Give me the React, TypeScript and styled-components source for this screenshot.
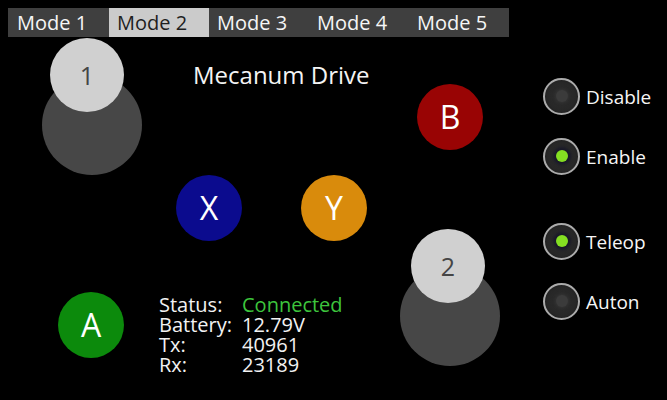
import React, { useState } from 'react';
import styled, { createGlobalStyle } from 'styled-components';

const GlobalStyle = createGlobalStyle`
  html, body {
    margin: 0;
    padding: 0;
    background: #000;
  }
  body {
    font-family: 'Open Sans', 'DejaVu Sans', sans-serif;
    color: #f2f2f2;
  }
`;

const Screen = styled.div`
  width: 667px;
  height: 400px;
  display: grid;
  grid-template-columns: 527px 1fr;
  grid-template-rows: 37px 1fr;
  background: #000;
  overflow: hidden;
`;

const TabBar = styled.div`
  grid-column: 1;
  grid-row: 1;
  margin: 8px 0 0 8px;
  width: 501px;
  height: 29px;
  padding-left: 1px;
  box-sizing: border-box;
  display: flex;
  background: #3f3f3f;
`;

const Tab = styled.div<{ $active: boolean }>`
  width: 100px;
  height: 29px;
  padding-left: 8px;
  box-sizing: border-box;
  font-size: 20px;
  line-height: 29px;
  white-space: nowrap;
  cursor: pointer;
  background: ${p => (p.$active ? '#cbcbcb' : 'transparent')};
  color: ${p => (p.$active ? '#1e1e1e' : '#f6f6f6')};
`;

const Pad = styled.div`
  grid-column: 1;
  grid-row: 2;
  position: relative;
  display: flex;
  flex-direction: column;
`;

const Title = styled.div`
  padding: 22px 0 0 193px;
  font-size: 24px;
  line-height: 32px;
  color: #f4f4f4;
`;

const StatusGrid = styled.div`
  margin-top: auto;
  padding: 0 0 25px 159px;
  display: grid;
  grid-template-columns: 83px auto;
  font-size: 20px;
  line-height: 20px;
  color: #f2f2f2;
`;

const StatusValue = styled.span<{ $ok?: boolean }>`
  color: ${p => (p.$ok ? '#3dc53d' : '#f2f2f2')};
`;

// joystick base + knob, placed on the pad canvas
const Stick = styled.div<{ $x: number; $y: number }>`
  position: absolute;
  left: ${p => p.$x}px;
  top: ${p => p.$y}px;
  width: 100px;
  height: 100px;
  border-radius: 50%;
  background: #474747;
`;

const Knob = styled.div<{ $dx: number }>`
  position: absolute;
  left: ${p => 13 + p.$dx}px;
  top: -37px;
  width: 74px;
  height: 74px;
  border-radius: 50%;
  background: #d0d0d0;
  color: #454545;
  font-size: 25px;
  display: flex;
  align-items: center;
  justify-content: center;
`;

const FaceButton = styled.div<{ $x: number; $y: number; $color: string }>`
  position: absolute;
  left: ${p => p.$x}px;
  top: ${p => p.$y}px;
  width: 66px;
  height: 66px;
  border-radius: 50%;
  background: ${p => p.$color};
  color: #fff;
  font-size: 32px;
  display: flex;
  align-items: center;
  justify-content: center;
  padding-bottom: 2px;
  box-sizing: border-box;
`;

const Side = styled.div`
  grid-column: 2;
  grid-row: 1 / 3;
  padding: 77px 0 0 16px;
  display: flex;
  flex-direction: column;
  gap: 47px;
`;

const RadioGroup = styled.div`
  display: flex;
  flex-direction: column;
  gap: 22px;
`;

const RadioRow = styled.label`
  display: flex;
  align-items: center;
  gap: 6px;
  height: 38px;
  cursor: pointer;
`;

const RadioRing = styled.span`
  width: 37px;
  height: 37px;
  box-sizing: border-box;
  border-radius: 50%;
  border: 2px solid #ababab;
  background: radial-gradient(circle, #2e2e2e 0%, #272727 60%, #161616 100%);
  display: flex;
  align-items: center;
  justify-content: center;
  flex-shrink: 0;
`;

const RadioDot = styled.span<{ $on: boolean }>`
  width: 12px;
  height: 12px;
  border-radius: 50%;
  background: ${p => (p.$on ? '#84de22' : '#3b3b3b')};
  box-shadow: ${p =>
    p.$on ? '0 0 3px 3px rgba(20, 20, 40, 0.8)' : '0 0 3px 1px #343434'};
`;

const RadioLabel = styled.span`
  font-size: 19px;
  color: #f6f6f6;
  padding-top: 1px;
`;

const modes = ['Mode 1', 'Mode 2', 'Mode 3', 'Mode 4', 'Mode 5'];

const Radio = ({
  label,
  on,
  onPick,
}: {
  label: string;
  on: boolean;
  onPick: () => void;
}) => (
  <RadioRow onClick={onPick}>
    <RadioRing>
      <RadioDot $on={on} />
    </RadioRing>
    <RadioLabel>{label}</RadioLabel>
  </RadioRow>
);

export default function App() {
  const [mode, setMode] = useState(1);
  const [enabled, setEnabled] = useState(true);
  const [teleop, setTeleop] = useState(true);

  return (
    <>
      <GlobalStyle />
      <Screen>
        <TabBar>
          {modes.map((m, i) => (
            <Tab key={m} $active={i === mode} onClick={() => setMode(i)}>
              {m}
            </Tab>
          ))}
        </TabBar>

        <Pad>
          <Title>Mecanum Drive</Title>

          <Stick $x={42} $y={38}>
            <Knob $dx={-5}>1</Knob>
          </Stick>
          <Stick $x={400} $y={229}>
            <Knob $dx={-2}>2</Knob>
          </Stick>

          <FaceButton $x={417} $y={47} $color="#990404">B</FaceButton>
          <FaceButton $x={176} $y={138} $color="#0b0b8e">X</FaceButton>
          <FaceButton $x={301} $y={138} $color="#d98b0c">Y</FaceButton>
          <FaceButton $x={58} $y={255} $color="#0c8a0c">A</FaceButton>

          <StatusGrid>
            <span>Status:</span>
            <StatusValue $ok>Connected</StatusValue>
            <span>Battery:</span>
            <StatusValue>12.79V</StatusValue>
            <span>Tx:</span>
            <StatusValue>40961</StatusValue>
            <span>Rx:</span>
            <StatusValue>23189</StatusValue>
          </StatusGrid>
        </Pad>

        <Side>
          <RadioGroup>
            <Radio label="Disable" on={!enabled} onPick={() => setEnabled(false)} />
            <Radio label="Enable" on={enabled} onPick={() => setEnabled(true)} />
          </RadioGroup>
          <RadioGroup>
            <Radio label="Teleop" on={teleop} onPick={() => setTeleop(true)} />
            <Radio label="Auton" on={!teleop} onPick={() => setTeleop(false)} />
          </RadioGroup>
        </Side>
      </Screen>
    </>
  );
}
